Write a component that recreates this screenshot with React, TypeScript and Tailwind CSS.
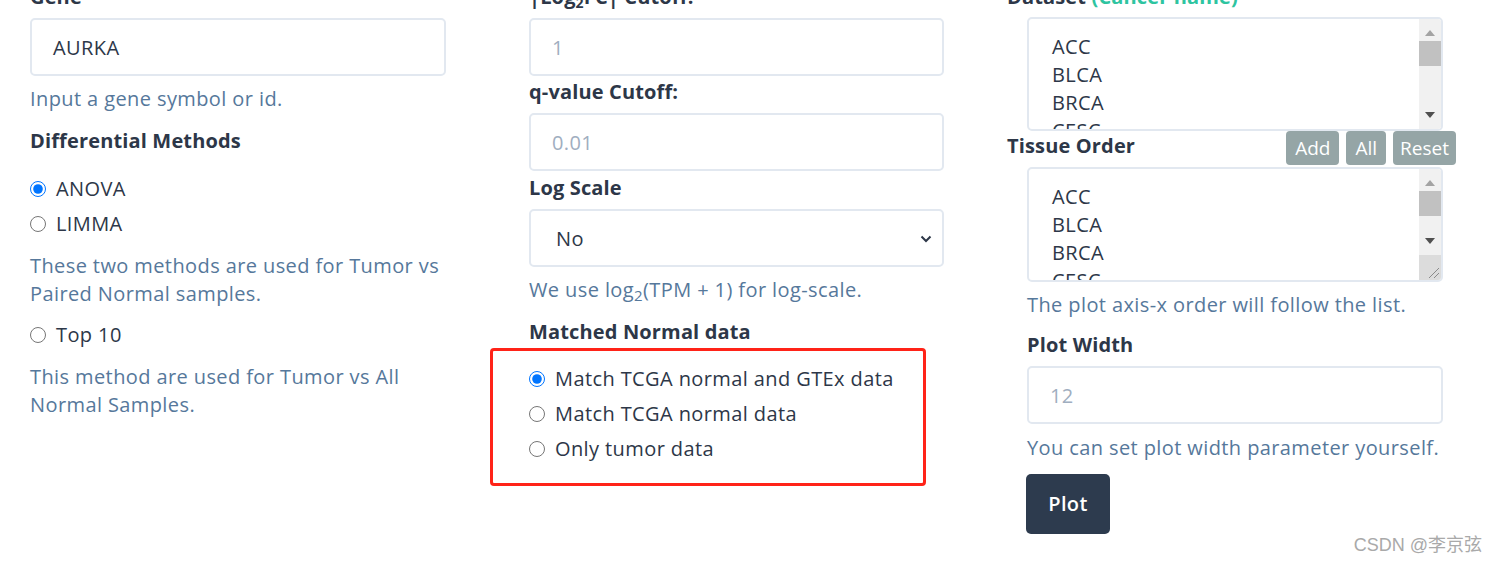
import React from "react";

const FONT = { fontFamily: "'Open Sans', 'Noto Sans', 'Noto Sans CJK SC', sans-serif" };

function Radio({ label, checked }: { label: string; checked?: boolean }) {
  return (
    <label className="flex items-center h-[35px] text-[#2d3748] text-[20px]">
      <input
        type="radio"
        checked={!!checked}
        onChange={() => {}}
        className="w-[16px] h-[16px] m-0 shrink-0"
      />
      <span className="ml-[10px] leading-[28px]">{label}</span>
    </label>
  );
}

function Help({ children, className = "" }: { children: React.ReactNode; className?: string }) {
  return <p className={"text-[20px] leading-[28px] text-[#56789b] " + className}>{children}</p>;
}

function Label({ children, className = "" }: { children: React.ReactNode; className?: string }) {
  return (
    <div className={"text-[20px] leading-[28px] font-bold tracking-[0.15px] text-[#2d3748] " + className}>
      {children}
    </div>
  );
}

function TextBox({ value, placeholder, className = "" }: { value?: string; placeholder?: string; className?: string }) {
  return (
    <div
      className={
        "h-[58px] border-2 border-[#e2e8f0] rounded-[5px] px-[21px] pt-[2px] flex items-center text-[20px] bg-white " +
        className
      }
    >
      {value ? <span className="text-[#2d3748]">{value}</span> : <span className="text-[#a0aec0]">{placeholder}</span>}
    </div>
  );
}

function ListBox({ resize, className = "" }: { resize?: boolean; className?: string }) {
  return (
    <div className={"border-2 border-[#e2e8f0] rounded-[5px] flex overflow-hidden bg-white " + className}>
      <div className="flex-1 pt-[14px] pl-[23px] text-[20px] leading-[28px] text-[#2d3748] overflow-hidden">
        <div>ACC</div>
        <div>BLCA</div>
        <div>BRCA</div>
        <div>CESC</div>
      </div>
      <div className="w-[22px] bg-[#f1f1f1] flex flex-col items-center">
        <svg width="10" height="6" viewBox="0 0 10 6" className="mt-[11px]">
          <polygon points="5,0 10,6 0,6" fill="#a3a3a3" />
        </svg>
        <div className="w-[22px] h-[25px] bg-[#c1c1c1] mt-[5px]" />
        <div className="flex-1" />
        <svg width="10" height="6" viewBox="0 0 10 6" className="mb-[11px]">
          <polygon points="0,0 10,0 5,6" fill="#505050" />
        </svg>
        {resize && (
          <div className="w-[22px] h-[25px] bg-[#dcdcdc] relative">
            <svg width="22" height="25" viewBox="0 0 22 25" className="absolute inset-0">
              <line x1="20" y1="13" x2="10" y2="23" stroke="#8a8a8a" strokeWidth="1" />
              <line x1="20" y1="18" x2="15" y2="23" stroke="#8a8a8a" strokeWidth="1" />
            </svg>
          </div>
        )}
      </div>
    </div>
  );
}

function GrayBtn({ children, px }: { children: React.ReactNode; px: string }) {
  return (
    <div className={"h-[34px] rounded-[4px] bg-[#95a5a6] text-white text-[19px] tracking-normal flex items-center " + px}>
      {children}
    </div>
  );
}

export default function App() {
  return (
    <div className="relative w-[1498px] h-[563px] overflow-hidden bg-white tracking-[0.4px]" style={FONT}>
      <div className="-mt-[17px] pl-[30px] grid grid-cols-[416px_415px_416px] gap-x-[83px] items-start">
        {/* Column 1 */}
        <div className="flex flex-col">
          <Label className="mb-[7px]">Gene</Label>
          <TextBox value="AURKA" />
          <Help className="mt-[9px]">Input a gene symbol or id.</Help>
          <Label className="mt-[14px]">Differential Methods</Label>
          <div className="mt-[16px]">
            <Radio label="ANOVA" checked />
            <Radio label="LIMMA" />
          </div>
          <Help className="mt-[11px]">
            These two methods are used for Tumor vs
            <br />
            Paired Normal samples.
          </Help>
          <div className="mt-[9px]">
            <Radio label="Top 10" />
          </div>
          <Help className="mt-[11px]">
            This method are used for Tumor vs All
            <br />
            Normal Samples.
          </Help>
        </div>

        {/* Column 2 */}
        <div className="flex flex-col">
          <Label className="mb-[7px]">
            |Log<sub className="text-[14px]">2</sub>FC| Cutoff:
          </Label>
          <TextBox placeholder="1" />
          <Label className="mt-[2px] mb-[7px]">q-value Cutoff:</Label>
          <TextBox placeholder="0.01" />
          <Label className="mt-[3px] mb-[7px]">Log Scale</Label>
          <div className="h-[58px] border-2 border-[#e2e8f0] rounded-[5px] pl-[25px] pr-[10px] pt-[2px] flex items-center justify-between text-[20px] text-[#2d3748]">
            <span>No</span>
            <svg width="12" height="8" viewBox="0 0 12 8">
              <polyline points="1.5,1.5 6,6 10.5,1.5" fill="none" stroke="#2d3748" strokeWidth="2" />
            </svg>
          </div>
          <Help className="mt-[9px]">
            We use log<sub className="text-[15px]">2</sub>(TPM + 1) for log-scale.
          </Help>
          <Label className="mt-[14px]">Matched Normal data</Label>
          <div className="relative mt-[15px]">
            <Radio label="Match TCGA normal and GTEx data" checked />
            <Radio label="Match TCGA normal data" />
            <Radio label="Only tumor data" />
            <div className="absolute left-[-39px] top-[-13px] w-[436px] h-[138px] border-[3px] border-[#ff2318] rounded-[4px] pointer-events-none" />
          </div>
        </div>

        {/* Column 3 */}
        <div className="flex flex-col">
          <Label className="-ml-[20px] mb-[6px]">
            Dataset <span className="text-[#2ec4a0]">(Cancer name)</span>
          </Label>
          <ListBox className="h-[114px]" />
          <div className="flex justify-between items-start -ml-[20px] -mr-[13px] h-[34px]">
            <Label className="mt-[1px]">Tissue Order</Label>
            <div className="flex gap-[7px]">
              <GrayBtn px="px-[9px]">Add</GrayBtn>
              <GrayBtn px="px-[9px]">All</GrayBtn>
              <GrayBtn px="px-[7px]">Reset</GrayBtn>
            </div>
          </div>
          <ListBox resize className="h-[115px] mt-[2px]" />
          <Help className="mt-[9px]">The plot axis-x order will follow the list.</Help>
          <Label className="mt-[12px]">Plot Width</Label>
          <TextBox placeholder="12" className="mt-[7px]" />
          <Help className="mt-[10px]">You can set plot width parameter yourself.</Help>
          <div className="mt-[12px] -ml-[1px] w-[84px] h-[60px] rounded-[5px] bg-[#2d3b4e] text-white text-[20px] font-semibold flex items-center justify-center">
            Plot
          </div>
        </div>
      </div>

      <div
        className="absolute right-[16px] bottom-[6px] text-[18px] text-[#a9a9a9] leading-[24px] tracking-normal"
        style={{ fontFamily: "Arial, 'Liberation Sans', 'Noto Sans CJK SC', sans-serif" }}
      >
        CSDN @李京弦
      </div>
    </div>
  );
}
